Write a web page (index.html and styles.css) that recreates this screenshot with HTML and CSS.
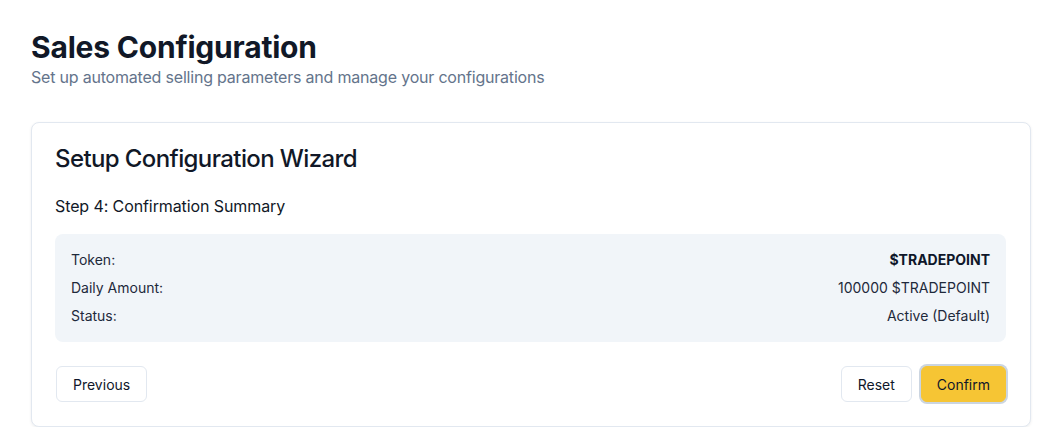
FILE: index.html
```html
<!DOCTYPE html>
<html lang="en">
<head>
<meta charset="utf-8">
<title>Sales Configuration</title>
<link rel="stylesheet" href="styles.css">
</head>
<body>
<main class="page">
  <header class="page-header">
    <h1 class="page-title">Sales Configuration</h1>
    <p class="page-subtitle">Set up automated selling parameters and manage your configurations</p>
  </header>
  <section class="card">
    <h2 class="card-title">Setup Configuration Wizard</h2>
    <h3 class="step-title">Step 4: Confirmation Summary</h3>
    <div class="summary">
      <div class="row"><span>Token:</span><span class="strong">$TRADEPOINT</span></div>
      <div class="row"><span>Daily Amount:</span><span>100000 $TRADEPOINT</span></div>
      <div class="row"><span>Status:</span><span>Active (Default)</span></div>
    </div>
    <div class="actions">
      <button class="btn">Previous</button>
      <div class="actions-right">
        <button class="btn">Reset</button>
        <button class="btn btn-primary">Confirm</button>
      </div>
    </div>
  </section>
</main>
</body>
</html>
```
FILE: styles.css
```css
* { box-sizing: border-box; }
html, body { margin: 0; background: #ffffff; }
body {
  font-family: Inter, "Noto Sans", sans-serif;
  color: #0f172a;
}
.page {
  padding: 29px 25px 0 31px;
}
.page-header { margin-bottom: 33px; }
.page-title {
  margin: 0;
  font-size: 30px;
  line-height: 36px;
  font-weight: 700;
  letter-spacing: -0.2px;
  color: #111827;
}
.page-subtitle {
  margin: 0;
  font-size: 16px;
  line-height: 24px;
  color: #64748b;
  letter-spacing: -0.2px;
}
.card {
  border: 1px solid #e2e8f0;
  border-radius: 8px;
  box-shadow: 0 1px 3px rgba(15, 23, 42, 0.08);
  padding: 20px 24px 24px 24px;
  background: #fff;
}
.card-title {
  margin: 0 0 17px -1px;
  font-size: 24px;
  line-height: 32px;
  font-weight: 500;
  letter-spacing: -0.6px;
  color: #111827;
}
.step-title {
  margin: 0 0 14px -1px;
  font-size: 16px;
  line-height: 28px;
  font-weight: 400;
  letter-spacing: -0.1px;
  color: #111827;
}
.summary {
  background: #f1f5f9;
  border-radius: 8px;
  padding: 12px 16px;
  margin-left: -1px;
  display: flex;
  flex-direction: column;
  font-size: 14px;
  color: #1e293b;
}
.row {
  display: flex;
  justify-content: space-between;
  line-height: 28px;
}
.strong { font-weight: 700; color: #0f172a; }
.actions {
  margin-top: 24px;
  display: flex;
  justify-content: space-between;
  align-items: center;
}
.actions-right { display: flex; gap: 9px; }
.btn {
  font-family: Inter, "Liberation Sans", sans-serif;
  font-size: 14px;
  height: 36px;
  padding: 0 16px;
  border: 1px solid #e2e8f0;
  border-radius: 6px;
  background: #fff;
  color: #0f172a;
}
.btn-primary {
  padding: 0 15px;
  background: #f6c534;
  border-color: #f6c534;
  box-shadow: 0 0 0 2px #cbd5e1;
}
```
